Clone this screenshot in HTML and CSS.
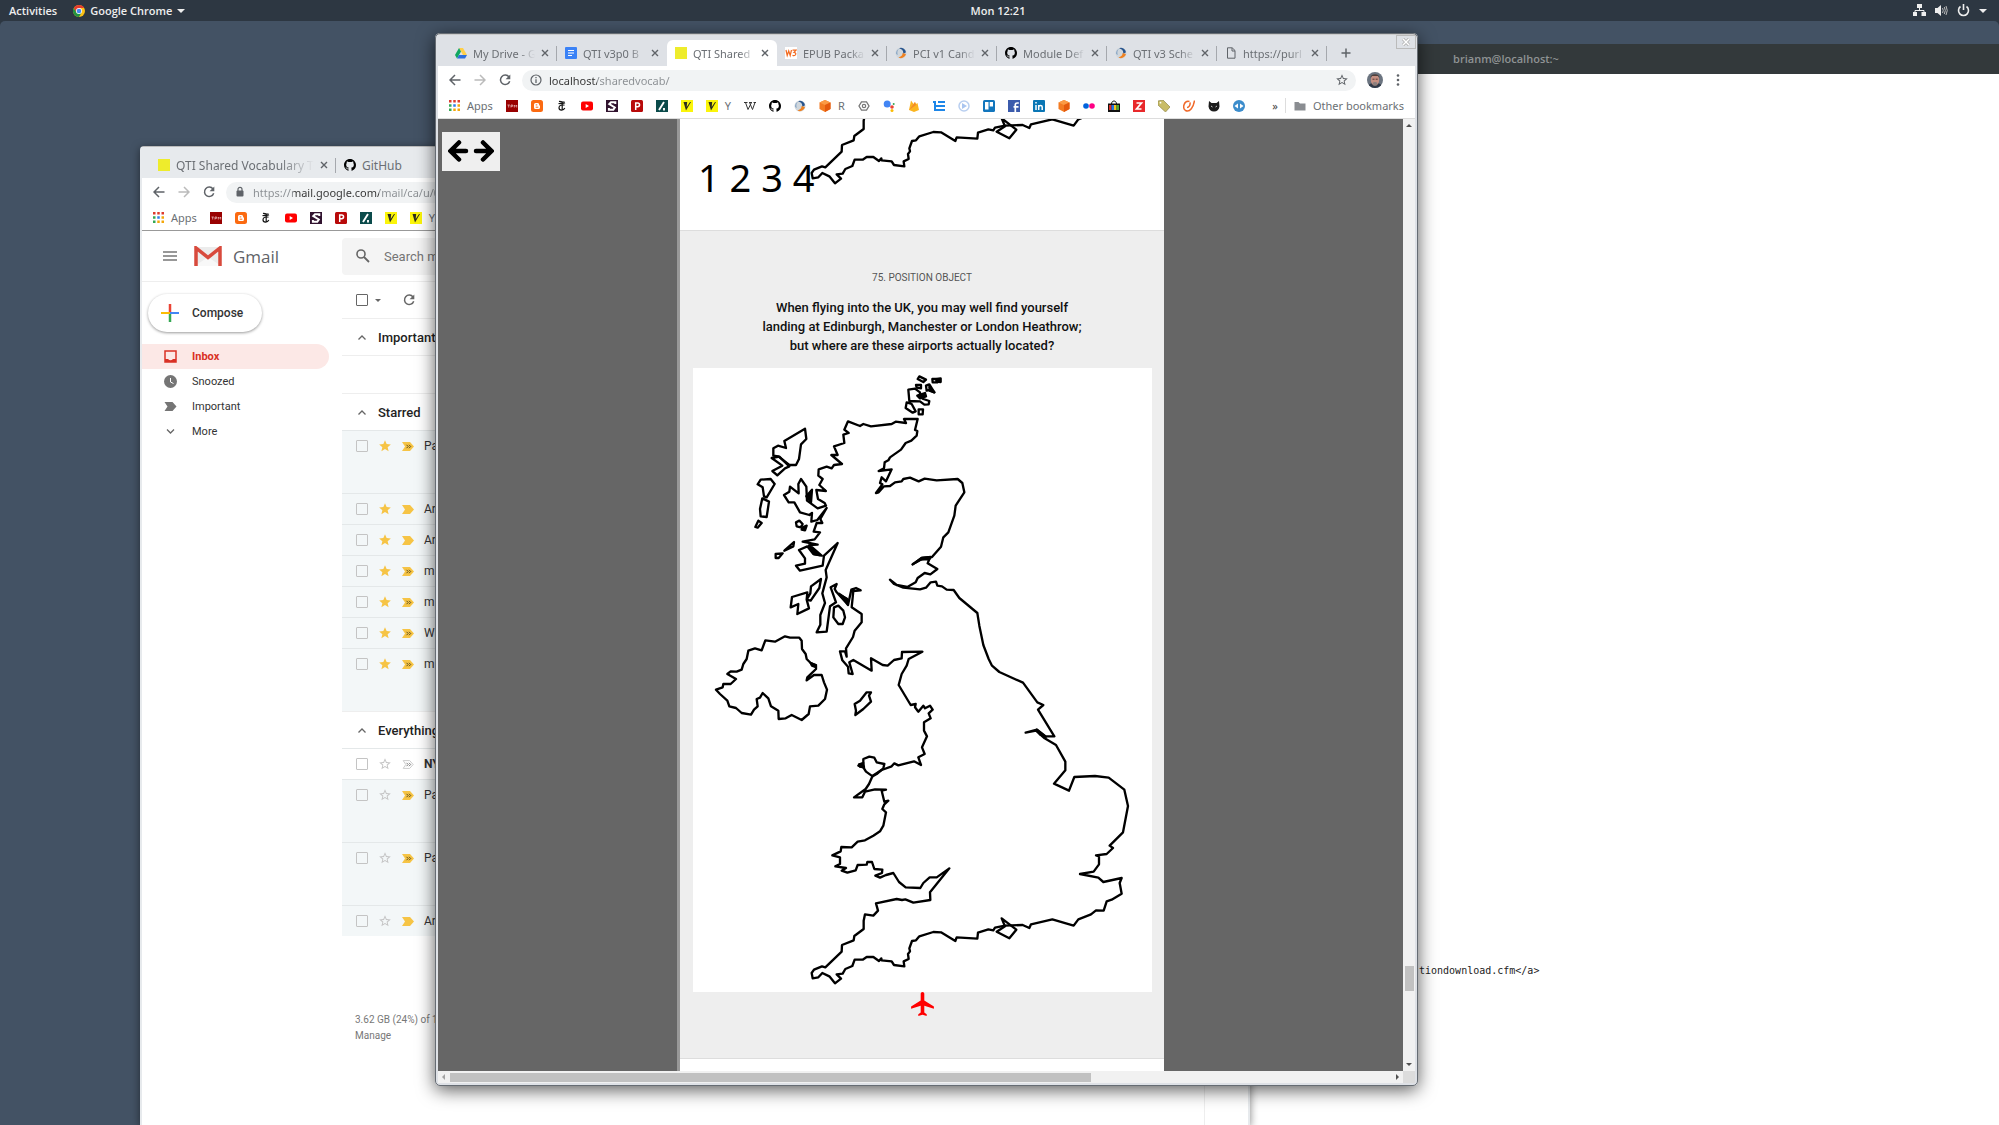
FILE: index.html
```html
<!DOCTYPE html>
<html lang="en">
<head>
    <meta charset="UTF-8">
    <meta name="viewport" content="width=device-width, initial-scale=1.0">
    <title>QTI Shared Vocabulary Test</title>
    <link rel="stylesheet" href="styles.css">
</head>
<body>

<!-- Icons -->
<svg class="sprite" aria-hidden="true">
    <symbol id="chrome" viewBox="0 0 12 12"><circle cx="6" cy="6" r="6" fill="#fbc116"/><path d="M.8 3A6 6 0 0 1 11.2 3H6L3.4 7.5z" fill="#e33b2e"/><path d="M.8 3A6 6 0 0 0 6 12l2.6-4.5H3.4z" fill="#229342"/><circle cx="6" cy="6" r="3" fill="#fff"/><circle cx="6" cy="6" r="2.3" fill="#4688f1"/></symbol>
    <symbol id="drive" viewBox="0 0 12 12"><path d="M4 1h4l4 7H8z" fill="#ffcf48"/><path d="M4 1l2 3.500-4 7L0 8z" fill="#11a861"/><path d="M4 8h8l-2 3.500H2z" fill="#2d6fdd"/></symbol>
    <symbol id="docs" viewBox="0 0 12 12"><rect width="12" height="12" rx="1" fill="#3b82f6"/><path d="M3 3.500h6M3 6h6M3 8.500h4" stroke="#fff" stroke-width="1.200"/></symbol>
    <symbol id="qti" viewBox="0 0 12 12"><rect width="12" height="12" fill="#eeec2c"/></symbol>
    <symbol id="w3" viewBox="0 0 12 12"><rect width="12" height="12" fill="#fff"/><path d="M1 3l1.200 5.500L3.700 4l1.500 4.500L6.500 3M7.500 3.200H11L9 5.400c3 .2 2 4-1.500 3" fill="none" stroke="#f36b21" stroke-width="1.200"/></symbol>
    <symbol id="ims" viewBox="0 0 12 12"><circle cx="6" cy="6" r="5.500" fill="#cfd6dc"/><path d="M4 1.200a5.200 5.200 0 0 1 7 4L8 7C9 4 7 2 4 1.200z" fill="#27548d"/><path d="M11 7a5.200 5.200 0 0 1-7.500 3.500C6 10 8 8 7.500 6z" fill="#ef8222"/><path d="M1 7a5 5 0 0 1 3-5c-2 2-2 4-1 6z" fill="#8fabc8"/></symbol>
    <symbol id="github" viewBox="0 0 16 16"><path d="M8 0C3.580 0 0 3.580 0 8c0 3.540 2.290 6.530 5.470 7.590.4.070.55-.17.55-.38v-1.490c-2.010.37-2.530-.49-2.690-.94-.09-.23-.48-.94-.82-1.130-.28-.15-.68-.52-.01-.53.63-.01 1.080.58 1.230.82.72 1.210 1.870.87 2.330.66.070-.52.28-.87.51-1.070-1.780-.2-3.640-.89-3.640-3.950 0-.87.31-1.590.82-2.150-.08-.2-.36-1.020.08-2.120 0 0 .67-.21 2.200.82a7.400 7.400 0 0 1 4 0c1.530-1.040 2.200-.82 2.200-.82.44 1.100.16 1.920.08 2.120.51.560.82 1.270.82 2.150 0 3.070-1.870 3.750-3.650 3.950.29.25.54.73.54 1.480v2.200c0 .21.15.46.55.38A8 8 0 0 0 16 8c0-4.420-3.580-8-8-8z"/></symbol>
    <symbol id="file" viewBox="0 0 12 12"><path d="M2.500.8h4.700L10 3.500v7.700H2.500zM7 1v3h3" fill="none" stroke="#5f6368"/></symbol>
    <symbol id="close" viewBox="0 0 8 8"><path d="M1 1l6 6M7 1L1 7" stroke="#5f6368" stroke-width="1.400"/></symbol>
    <symbol id="plus" viewBox="0 0 10 10"><path d="M5 .5v9M.5 5h9" stroke="#5f6368" stroke-width="1.500"/></symbol>
    <symbol id="back" viewBox="0 0 12 12"><path d="M11.500 6H1M6 1L1 6l5 5" fill="none" stroke="currentColor" stroke-width="1.500"/></symbol>
    <symbol id="forward" viewBox="0 0 12 12"><path d="M.5 6H11M6 1l5 5-5 5" fill="none" stroke="currentColor" stroke-width="1.500"/></symbol>
    <symbol id="reload" viewBox="0 0 12 12"><path d="M10 3A4.700 4.700 0 1 0 10.700 7.200" fill="none" stroke="currentColor" stroke-width="1.500"/><path d="M11.300.5v4.700H6.600z" fill="currentColor"/></symbol>
    <symbol id="info" viewBox="0 0 12 12"><circle cx="6" cy="6" r="5" fill="none" stroke="#5f6368" stroke-width="1.200"/><path d="M6 5.200V9M6 3v1.300" stroke="#5f6368" stroke-width="1.300"/></symbol>
    <symbol id="lock" viewBox="0 0 12 12"><rect x="2.500" y="4.500" width="7" height="6" rx="1" fill="#5f6368"/><path d="M4 5V3.300a2 2 0 0 1 4 0V5" fill="none" stroke="#5f6368" stroke-width="1.200"/></symbol>
    <symbol id="star-line" viewBox="0 0 24 24"><path d="M22 9.240l-7.190-.62L12 2 9.190 8.630 2 9.240l5.460 4.730L5.820 21 12 17.270 18.180 21l-1.630-7.030zM12 15.400l-3.760 2.270 1-4.280-3.320-2.880 4.380-.38L12 6.100l1.710 4.040 4.380.38-3.320 2.880 1 4.280z"/></symbol>
    <symbol id="star" viewBox="0 0 24 24"><path d="M12 17.270L18.180 21l-1.640-7.030L22 9.240l-7.190-.61L12 2 9.190 8.630 2 9.240l5.460 4.730L5.820 21z"/></symbol>
    <symbol id="apps" viewBox="0 0 11 11"><path d="M0 0h2.500v2.500H0zM4.250 0h2.500v2.500h-2.500zM8.500 0H11v2.500H8.500z" fill="#dd3b2d"/><path d="M0 4.250h2.500v2.500H0z" fill="#33a853"/><path d="M4.250 4.250h2.500v2.500h-2.500z" fill="#2f7de8"/><path d="M8.500 4.250H11v2.500H8.500zM4.250 8.500h2.500V11h-2.500zM8.500 8.500H11V11H8.500z" fill="#f4a70b"/><path d="M0 8.500h2.500V11H0z" fill="#33a853"/></symbol>
    <symbol id="tpm" viewBox="0 0 12 12"><rect width="12" height="12" fill="#990101"/><path d="M1.500 5h2.300M2.700 5v2.500M5 7.500V5h1.700v1.300H5M8.300 7.500V5l1.200 1.300L10.700 5v2.500" fill="none" stroke="#e8b9b9" stroke-width=".8"/></symbol>
    <symbol id="blogger" viewBox="0 0 12 12"><rect width="12" height="12" rx="2.500" fill="#fb6a11"/><path d="M3 4.500A1.500 1.500 0 0 1 4.500 3h2a1.800 1.800 0 0 1 1.700 2C8.300 5.600 9 5.400 9 6v1.500A1.500 1.500 0 0 1 7.500 9h-3A1.500 1.500 0 0 1 3 7.500z" fill="#fff"/><path d="M4.700 4.900h1.600M4.700 7.200h2.600" stroke="#fb6a11"/></symbol>
    <symbol id="nyt" viewBox="0 0 12 12"><path d="M3 1.500c1.500-.5 3 1.300 5.500.2M2.500 3.800c2.500-1.300 4 .6 6.500-1M8.500 5.200C5.500 4 3 5.500 3 7.700c0 3 4.500 3.300 5.800.3M6.200 2.500V10.500" fill="none" stroke="#151515" stroke-width="1.200"/></symbol>
    <symbol id="youtube" viewBox="0 0 12 12"><rect y="1.500" width="12" height="9" rx="2" fill="#f00"/><path d="M4.700 4v4L8 6z" fill="#fff"/></symbol>
    <symbol id="slate" viewBox="0 0 12 12"><rect width="12" height="12" fill="#31132f"/><path d="M9.300 4V2.300H5L3.300 4l5.500 3.500L7.300 9.700H2.900V8" fill="none" stroke="#fff" stroke-width="2"/></symbol>
    <symbol id="politico" viewBox="0 0 12 12"><rect width="12" height="12" rx="1.500" fill="#b80a0a"/><path d="M4.700 10V3h2a1.700 1.700 0 0 1 0 3.700h-2" fill="none" stroke="#fff" stroke-width="1.500"/></symbol>
    <symbol id="slash" viewBox="0 0 12 12"><rect width="12" height="12" fill="#0b4b4b"/><path d="M3 10l5-8M8 8v2.500" stroke="#fff" stroke-width="1.900"/></symbol>
    <symbol id="vox" viewBox="0 0 12 12"><rect width="12" height="12" fill="#fbf50a"/><path d="M2.500 2h3.700L5.700 7 9 2h1L5 10.500z" fill="#2c2c1d"/></symbol>
    <symbol id="wiki" viewBox="0 0 12 12"><path d="M0 2.500h3.500M5 2.500h3M9.500 2.500H12M1.500 2.500l2.500 7 3.500-7M5.500 2.500l3 7 2.500-7" fill="none" stroke="#333"/></symbol>
    <symbol id="cube" viewBox="0 0 12 12"><path d="M6 0l5.500 2.500v6.500L6 12 .5 9V2.500z" fill="#f37b22"/><path d="M6 0l5.500 2.500L6 5 .5 2.500z" fill="#fb9a45"/><path d="M6 5l5.500-2.500v6.500L6 12z" fill="#e4590d"/></symbol>
    <symbol id="hex" viewBox="0 0 12 12"><path d="M3.500 1.800h5L11 6l-2.500 4.200h-5L1 6z" fill="none" stroke="#777" stroke-width="1.300"/><circle cx="6" cy="6" r="1.700" fill="none" stroke="#777" stroke-width="1.200"/></symbol>
    <symbol id="assistant" viewBox="0 0 12 12"><circle cx="4.200" cy="4" r="3.500" fill="#4285f4"/><circle cx="9" cy="7" r="1.800" fill="#ea4335"/><circle cx="10.700" cy="4" r="1" fill="#34a853"/><circle cx="9" cy="10.500" r="1.500" fill="#fbbc05"/></symbol>
    <symbol id="firebase" viewBox="0 0 12 12"><path d="M1 10L3 .5 5.500 4 7 2l1 2 1.500-1L11 10l-5 2z" fill="#fbb51f"/><path d="M1 10l6-8 1 3z" fill="#f48b28"/></symbol>
    <symbol id="tree" viewBox="0 0 12 12"><path d="M0 2h3M2 2v8h3M2 6h3M5 2h7M5 6h7M5 10h7" fill="none" stroke="#1d86e8" stroke-width="2"/></symbol>
    <symbol id="play" viewBox="0 0 12 12"><circle cx="6" cy="6" r="5" fill="#fff" stroke="#b9cff0" stroke-width="1.500"/><path d="M4 3l5 3-5 3z" fill="#a9c5f0"/></symbol>
    <symbol id="trello" viewBox="0 0 12 12"><rect width="12" height="12" rx="1.500" fill="#1276bd"/><path d="M2 2h3.500v7.500H2zM6.700 2H10v4.500H6.700z" fill="#fff"/></symbol>
    <symbol id="facebook" viewBox="0 0 12 12"><rect width="12" height="12" fill="#3b5bac"/><path d="M7.300 12V4.800A1.800 1.800 0 0 1 9.300 3h1.500M5.500 6.800h5" fill="none" stroke="#fff" stroke-width="1.700"/></symbol>
    <symbol id="linkedin" viewBox="0 0 12 12"><rect width="12" height="12" rx="1" fill="#0a76b5"/><path d="M3 5v5M3 2v1.600M5.700 10V5M5.700 7c0-2 3.500-2 3.500 0v3" fill="none" stroke="#fff" stroke-width="1.500"/></symbol>
    <symbol id="flickr" viewBox="0 0 12 12"><circle cx="3" cy="6" r="2.800" fill="#0063dc"/><circle cx="9" cy="6" r="2.800" fill="#ff0084"/></symbol>
    <symbol id="bag" viewBox="0 0 12 12"><path d="M3.500 4c0-4 5-4 5 0" fill="none" stroke="#111"/><path d="M0 3.500h12V12H0z" fill="#111"/><path d="M1 5h2.500v5H1z" fill="#d93025"/><path d="M3.500 5H6v5H3.500z" fill="#1e73e8"/><path d="M6 5h2.500v5H6z" fill="#f6c21c"/><path d="M8.500 5H11v5H8.500z" fill="#52a535"/></symbol>
    <symbol id="zotero" viewBox="0 0 12 12"><rect width="12" height="12" fill="#e8282b"/><path d="M3.500 3h5l-5 6h5" fill="none" stroke="#fff" stroke-width="1.700"/></symbol>
    <symbol id="tag" viewBox="0 0 12 12"><path d="M0 1l5-1 7 7-4.500 5L0 5z" fill="#c8bc66" stroke="#8f8748" stroke-width=".7"/><circle cx="2.500" cy="2.700" r=".9" fill="#fff"/></symbol>
    <symbol id="swirl" viewBox="0 0 12 12"><path d="M6.500 1.500C1 0 -1 8 2.500 10.500 7 12.500 10.500 7 11.500.5M4 7.500c2 0 3.500-2.500 3-5" fill="none" stroke="#f0692a" stroke-width="1.500"/></symbol>
    <symbol id="cat" viewBox="0 0 12 12"><path d="M1 1l2.500 2h5L11 1l.5 5.500C11 10 9 11.500 6 11.500S1 10 .5 6.500z" fill="#1d1d1d"/><path d="M3 6l1.500 1M9 6L7.500 7" stroke="#ccc"/></symbol>
    <symbol id="sync" viewBox="0 0 12 12"><circle cx="6" cy="6" r="6" fill="#3c8dcc"/><path d="M5 3.500v5L1.500 6zM7 3.500v5L10.500 6z" fill="#fff"/></symbol>
    <symbol id="folder" viewBox="0 0 12 12"><path d="M.5 2h4L6 3.500h5.500v7H.5z" fill="#8a8d91"/></symbol>
    <symbol id="face" viewBox="0 0 16 16"><clipPath id="round"><circle cx="8" cy="8" r="8"/></clipPath><g clip-path="url(#round)"><path d="M0 0h16v16H0z" fill="#6b7480"/><path d="M0 16c1-4 4-5 8-5s7 1 8 5z" fill="#303947"/><ellipse cx="8" cy="8" rx="4.200" ry="5.500" fill="#c58f81"/><path d="M3.500 6C3 1 13 1 12.500 6L11 4H5z" fill="#4e403c"/><path d="M5.500 11c1.500-1.500 3.500-1.500 5 0l-1 2.500h-3z" fill="#8b7f7c"/><path d="M5.500 7.200h2M8.700 7.200h2" stroke="#553b36"/></g></symbol>
    <symbol id="marker" viewBox="0 0 12 9"><path d="M0 0h8l4 4.500L8 9H0l3-4.500z"/></symbol>
    <symbol id="marker-open" viewBox="0 0 12 9"><path d="M1.200.6h6.500l3.500 3.900-3.500 3.900H1.200l2.600-3.900z" fill="none" stroke="#ccc"/><path d="M4.500 2.800L6.200 4.500 4.500 6.200M7 2.800l1.700 1.700L7 6.200" fill="none" stroke="#777"/></symbol>
    <symbol id="marker-double" viewBox="0 0 12 9"><path d="M0 0h8l4 4.500L8 9H0l3-4.500z"/><path d="M4.500 2.800L6.200 4.500 4.500 6.200M7 2.800l1.700 1.700L7 6.200" fill="none" stroke="#5c4c1d"/></symbol>
    <symbol id="chevron-up" viewBox="0 0 8 5"><path d="M.5 4.500L4 1l3.500 3.500" fill="none" stroke="#666" stroke-width="1.300"/></symbol>
    <symbol id="chevron-down" viewBox="0 0 8 5"><path d="M.5.5L4 4 7.500.5" fill="none" stroke="#666" stroke-width="1.300"/></symbol>

    <!-- Outline of the United Kingdom -->
    <symbol id="uk" viewBox="9 27 1377 1872">
        <g fill="none" stroke="#000" stroke-width="7" stroke-linejoin="round">
            <path d="M642 180L683 180 675 213 682 216 680 230 664 245 647 252 633 272 600 295 595 304 584 310 582 328 566 336 605 331 588 367 575 355 570 372 577 376 558 402 566 400 582 382 600 381 615 370 635 367 640 360 660 356 686 367 704 359 740 364 803 360 817 372 823 400 797 440 793 470 775 520 760 535 753 563 726 594 695 597 668 616 690 602 718 600 713 613 742 630 721 646 704 642 683 657 677 670 652 684 620 678 600 662 612 675 640 686 690 691 708 686 722 670 738 668 742 680 756 682 770 692 791 693 808 717 862 762 868 800 880 858 896 900 906 920 928 939 999 971 1042 1030 1060 1038 1044 1052 1093 1132 1067 1132 1041 1112 1007 1121 1038 1115 1064 1138 1098 1158 1126 1208 1126 1234 1092 1274 1137 1295 1153 1254 1215 1251 1256 1256 1303 1292 1314 1341 1299 1420 1259 1460 1269 1467 1250 1485 1218 1489 1227 1492 1227 1516 1211 1538 1170 1545 1225 1556 1240 1569 1295 1557 1289 1572 1295 1604 1265 1622 1250 1627 1241 1655 1218 1654 1203 1666 1165 1681 1151 1700 1087 1681 1023 1696 1018 1707 998 1698 945 1700 915 1706 910 1714 895 1711 864 1721 862 1739 800 1735 796 1746 753 1720 730 1719 688 1732 678 1744 666 1746 658 1768 660 1777 654 1785 656 1800 641 1807 643 1822 612 1818 605 1807 575 1804 574 1798 567 1806 550 1794 530 1794 518 1802 494 1802 487 1821 466 1830 458 1844 440 1846 453 1859 435 1873 418 1852 397 1842 385 1855 368 1858 365 1842 372 1832 396 1822 406 1825 455 1778 456 1758 491 1744 493 1731 521 1710 521 1685 525 1666 550 1670 564 1655 558 1633 620 1620 636 1623 646 1621 670 1631 721 1623 720 1600 778 1528 740 1555 719 1555 700 1572 691 1587 647 1585 627 1569 610 1542 588 1548 570 1556 556 1550 576 1542 577 1532 553 1530 546 1509 532 1509 530 1517 503 1518 497 1534 472 1541 455 1535 468 1527 436 1522 450 1515 450 1495 427 1489 452 1477 454 1464 485 1465 503 1448 525 1444 550 1430 570 1417 580 1400 588 1360 577 1350 583 1336 595 1325 583 1328 575 1295 588 1292 555 1291 525 1298 517 1315 492 1315 527 1290 537 1275 548 1250 575 1233 605 1222 613 1213 625 1219 672 1207 693 1218 685 1195 704 1185 696 1165 711 1132 702 1115 702 1090 722 1078 716 1063 728 1052 720 1040 705 1048 700 1040 685 1058 675 1045 677 1035 662 1038 626 978 635 945 650 920 656 900 697 878 636 879 635 898 612 903 593 920 578 918 543 898 545 935 490 903 478 910 488 945 476 943 474 923 457 904 450 877 465 877 470 893 468 868 489 834 494 815 515 790 515 765 485 745 490 696 512 694 498 687 484 692 474 738 447 704 470 720 472 735 440 700 434 690 440 675 422 685 438 730 420 742 410 818 380 820 391 797 391 768 405 732 397 703 410 655 407 633 443 552 402 590 398 620 330 635 318 620 345 614 345 598 327 573 352 562 370 585 395 590 358 558 383 557 338 548 374 541 390 520 371 518 380 492 397 492 391 480 410 447 382 483 364 488 366 462 358 468 330 460 313 430 296 430 282 408 298 398 300 383 326 403 325 375 333 360 349 383 351 425 383 448 408 440 404 432 384 420 379 393 408 396 388 378 398 360 385 350 386 331 410 323 425 328 432 318 456 315 424 288 443 288 432 262 463 252 460 227 476 222 463 212 474 187 510 201 520 195 543 202 605 195 617 188 648 192z"/>
            <path d="M345 209L283 246 288 267 264 260 250 268 250 290 265 292 298 318 318 318 327 300 333 256 349 240z"/>
            <path d="M245 297L277 320 247 336 262 349 285 328 298 322 268 293z"/>
            <path d="M212 362L242 360 254 375 230 415 222 412 218 385 203 376zM217 418L237 428 230 474 212 472 210 450zM205 485L215 492 203 506 196 504z"/>
            <path d="M318 490L328 485 338 495 332 505 320 502zM312 549L310 562 283 575zM257 585L278 583 266 597 257 597z"/>
            <path d="M393 660L363 682 361 703 350 722 362 725 388 687zM352 700L306 714 302 745 325 735 322 765 357 748 350 722z"/>
            <path d="M432 745L445 740 460 755 465 775 458 795 445 795 430 775z"/>
            <path d="M655 92L675 89 690 100 690 112 700 120 718 126 716 136 703 137 690 127 658 126zM650 130L665 135 677 157 668 161 647 147zM686 151L699 151 698 166 686 166z"/>
            <path d="M688 52L708 62 700 69 683 60zM678 78L693 78 693 88 680 86zM727 60L738 60 742 70 728 70zM708 80L718 76 733 100 718 93 710 95z"/>
            <path d="M740 60L752 58 752 69 740 68zM718 84L733 100 720 96zM682 110L705 102 708 112 690 118zM338 505L350 500 345 514 335 512zM349 412L366 392 363 430zM358 560L372 585 390 588 368 572zM450 708L472 720 473 735zM362 912L378 918 376 924 366 920zM507 1216L520 1212 522 1225 510 1223zM695 597L668 616 700 598 718 600 722 594zM1040 1112L1067 1134 1050 1126z" fill="#000"/>
            <path d="M226 844L255 848 285 832 300 836 328 836 335 845 336 870 347 885 350 900 362 912 378 920 378 930 352 955 350 964 372 948 395 948 402 970 411 992 405 1020 385 1040 360 1042 356 1065 335 1083 305 1068 287 1078 266 1080 265 1055 243 1042 235 1018 218 1002 210 1016 200 1020 203 1042 192 1052 183 1067 155 1062 138 1047 118 1042 112 1025 90 1005 78 992 98 985 100 975 122 975 138 960 112 945 122 937 140 938 155 932 160 915 170 900 175 875 195 868 215 874z"/>
            <path d="M494 1035L510 1025 530 1000 543 1000 537 1010 543 1028 520 1050 496 1068 498 1055z"/>
            <path d="M520 1200L538 1193 553 1196 560 1210 583 1215 580 1228 560 1245 548 1252 528 1238 520 1225 505 1220 520 1212z"/>
            <path d="M935 1678L979 1712 958 1738 920 1718 945 1702z"/>
        </g>
    </symbol>
</svg>

<header class="topbar">
    <div class="topbar-left">
        <button>Activities</button>
        <button><svg class="i12"><use href="#chrome"/></svg>Google Chrome<span class="caret"></span></button>
    </div>
    <time>Mon 12:21</time>
    <div class="topbar-right">
        <svg width="13" height="13" viewBox="0 0 13 13"><path d="M4 0h5v4H4zM0 8h4v4H0zM8.500 8h4.500v4H8.500z" fill="#eee"/><path d="M6.500 4v2.500M2 8V6.500h9V8" fill="none" stroke="#eee"/></svg>
        <svg width="13" height="13" viewBox="0 0 13 13"><path d="M0 4h2.500L6 1v11L2.500 9H0z" fill="#eee"/><path d="M7.500 4q1.500 2.500 0 5M9.300 3q2 3.500 0 7M11 2q2.500 4.500 0 9" fill="none" stroke="#bbb"/></svg>
        <svg width="13" height="13" viewBox="0 0 13 13"><path d="M3.500 2.500a5 5 0 1 0 6 0M6.500 0v6" fill="none" stroke="#eee" stroke-width="1.600"/></svg>
        <span class="caret"></span>
    </div>
</header>

<main class="desktop">

    <!-- Terminal -->
    <section class="window terminal">
        <h2>brianm@localhost:~</h2>
        <pre>tiondownload.cfm&lt;/a&gt;</pre>
    </section>

    <!-- Gmail -->
    <section class="window mail">
        <nav class="tabs">
            <a class="tab wide" href="#"><svg class="i12"><use href="#qti"/></svg><span>QTI Shared Vocabulary Te</span><svg class="i8"><use href="#close"/></svg></a>
            <a class="tab wide" href="#"><svg class="i12"><use href="#github"/></svg><span>GitHub</span></a>
        </nav>
        <div class="toolbar">
            <button aria-label="Back"><svg class="i12"><use href="#back"/></svg></button>
            <button aria-label="Forward" class="off"><svg class="i12"><use href="#forward"/></svg></button>
            <button aria-label="Reload"><svg class="i12"><use href="#reload"/></svg></button>
            <div class="address">
                <svg class="i12"><use href="#lock"/></svg>
                <input class="url-mail" aria-label="Address" value="https://mail.google.com/mail/ca/u/0/">
            </div>
        </div>
        <nav class="bookmarks">
            <a href="#"><svg class="i11"><use href="#apps"/></svg>Apps</a>
            <a href="#"><svg class="i12"><use href="#tpm"/></svg></a>
            <a href="#"><svg class="i12"><use href="#blogger"/></svg></a>
            <a href="#"><svg class="i12"><use href="#nyt"/></svg></a>
            <a href="#"><svg class="i12"><use href="#youtube"/></svg></a>
            <a href="#"><svg class="i12"><use href="#slate"/></svg></a>
            <a href="#"><svg class="i12"><use href="#politico"/></svg></a>
            <a href="#"><svg class="i12"><use href="#slash"/></svg></a>
            <a href="#"><svg class="i12"><use href="#vox"/></svg></a>
            <a href="#"><svg class="i12"><use href="#vox"/></svg>Y</a>
        </nav>
        <div class="gmail">
            <header class="gmail-head">
                <button class="menu" aria-label="Menu"><svg width="14" height="10" viewBox="0 0 14 10"><path d="M0 1h14M0 5h14M0 9h14" stroke="#777" stroke-width="1.500"/></svg></button>
                <svg width="28" height="20" viewBox="0 0 28 20"><path d="M1 1h26v19H1z" fill="#ececec"/><path d="M1 20l13-9 13 9z" fill="#f8f8f8"/><path d="M2 20V2l12 9.500L26 2v18" fill="none" stroke="#d84a3d" stroke-width="3.500"/></svg>
                <span class="brand">Gmail</span>
                <div class="search">
                    <svg width="14" height="14" viewBox="0 0 14 14"><circle cx="5" cy="5" r="4" fill="none" stroke="#666" stroke-width="1.600"/><path d="M8 8l5 5" stroke="#666" stroke-width="1.800"/></svg>
                    <input aria-label="Search mail" placeholder="Search m">
                </div>
            </header>
            <div class="gmail-body">
                <aside>
                    <button class="compose"><svg width="18" height="18" viewBox="0 0 18 18"><path d="M9 0v8" stroke="#ea4335" stroke-width="2.500"/><path d="M9 10v8" stroke="#34a853" stroke-width="2.500"/><path d="M0 9h9" stroke="#fbbc05" stroke-width="2"/><path d="M9 9h9" stroke="#4285f4" stroke-width="2"/></svg>Compose</button>
                    <a class="folder current" href="#"><svg width="13" height="13" viewBox="0 0 13 13"><path d="M1 1h11v11H1z" fill="none" stroke="#d93025" stroke-width="1.500"/><path d="M1 9h3q2.500 2.500 5 0h3v3H1z" fill="#d93025"/></svg>Inbox</a>
                    <a class="folder" href="#"><svg width="13" height="13" viewBox="0 0 13 13"><circle cx="6.500" cy="6.500" r="6.500" fill="#757575"/><path d="M6.500 3v4l3 1.500" fill="none" stroke="#fff"/></svg>Snoozed</a>
                    <a class="folder" href="#"><svg width="13" height="9" fill="#757575"><use href="#marker"/></svg>Important</a>
                    <a class="folder" href="#"><svg width="13" height="5"><use href="#chevron-down"/></svg>More</a>
                </aside>
                <div class="messages">
                    <div class="tools"><input type="checkbox" aria-label="Select all"><span class="caret dark"></span><button aria-label="Refresh"><svg class="i12"><use href="#reload"/></svg></button></div>
                    <h3><svg width="8" height="5"><use href="#chevron-up"/></svg>Important</h3>
                    <div class="empty"></div>
                    <h3><svg width="8" height="5"><use href="#chevron-up"/></svg>Starred</h3>
                    <ul>
                        <li class="tall"><input type="checkbox" aria-label="Select"><svg class="i14 on"><use href="#star"/></svg><svg class="mark"><use href="#marker-double"/></svg>Pa</li>
                        <li><input type="checkbox" aria-label="Select"><svg class="i14 on"><use href="#star"/></svg><svg class="mark"><use href="#marker"/></svg>Ar</li>
                        <li><input type="checkbox" aria-label="Select"><svg class="i14 on"><use href="#star"/></svg><svg class="mark"><use href="#marker"/></svg>Ar</li>
                        <li><input type="checkbox" aria-label="Select"><svg class="i14 on"><use href="#star"/></svg><svg class="mark"><use href="#marker-double"/></svg>m</li>
                        <li><input type="checkbox" aria-label="Select"><svg class="i14 on"><use href="#star"/></svg><svg class="mark"><use href="#marker-double"/></svg>m</li>
                        <li><input type="checkbox" aria-label="Select"><svg class="i14 on"><use href="#star"/></svg><svg class="mark"><use href="#marker-double"/></svg>W</li>
                        <li class="tall"><input type="checkbox" aria-label="Select"><svg class="i14 on"><use href="#star"/></svg><svg class="mark"><use href="#marker-double"/></svg>m</li>
                    </ul>
                    <h3><svg width="8" height="5"><use href="#chevron-up"/></svg>Everything</h3>
                    <ul>
                        <li class="unread"><input type="checkbox" aria-label="Select"><svg class="i14"><use href="#star-line"/></svg><svg class="mark"><use href="#marker-open"/></svg>NY</li>
                        <li class="tall"><input type="checkbox" aria-label="Select"><svg class="i14"><use href="#star-line"/></svg><svg class="mark"><use href="#marker-double"/></svg>Pa</li>
                        <li class="tall"><input type="checkbox" aria-label="Select"><svg class="i14"><use href="#star-line"/></svg><svg class="mark"><use href="#marker-double"/></svg>Pa</li>
                        <li><input type="checkbox" aria-label="Select"><svg class="i14"><use href="#star-line"/></svg><svg class="mark"><use href="#marker"/></svg>Ar</li>
                    </ul>
                    <footer>3.62 GB (24%) of 1<br><a href="#">Manage</a></footer>
                </div>
                <div class="side-panel"></div>
            </div>
        </div>
    </section>

    <!-- Shared vocabulary test page -->
    <section class="window browser">
        <button class="window-close" aria-label="Close window"><svg class="i8" viewBox="0 0 8 8"><path d="M1 1l6 6M7 1L1 7" stroke="#aaa" stroke-width="3"/><path d="M1 1l6 6M7 1L1 7" stroke="#fff" stroke-width="1.500"/></svg></button>
        <nav class="tabs">
            <a class="tab" href="#"><svg class="i12"><use href="#drive"/></svg><span>My Drive - G</span><svg class="i8"><use href="#close"/></svg></a>
            <a class="tab no-line" href="#"><svg class="i12"><use href="#docs"/></svg><span>QTI v3p0 B</span><svg class="i8"><use href="#close"/></svg></a>
            <a class="tab active no-line" href="#"><svg class="i12"><use href="#qti"/></svg><span>QTI Shared</span><svg class="i8"><use href="#close"/></svg></a>
            <a class="tab" href="#"><svg class="i12"><use href="#w3"/></svg><span>EPUB Packa</span><svg class="i8"><use href="#close"/></svg></a>
            <a class="tab" href="#"><svg class="i12"><use href="#ims"/></svg><span>PCI v1 Cand</span><svg class="i8"><use href="#close"/></svg></a>
            <a class="tab" href="#"><svg class="i12"><use href="#github"/></svg><span>Module Def</span><svg class="i8"><use href="#close"/></svg></a>
            <a class="tab" href="#"><svg class="i12"><use href="#ims"/></svg><span>QTI v3 Sche</span><svg class="i8"><use href="#close"/></svg></a>
            <a class="tab" href="#"><svg class="i12"><use href="#file"/></svg><span>https://purl</span><svg class="i8"><use href="#close"/></svg></a>
            <button class="new-tab" aria-label="New tab"><svg class="i10"><use href="#plus"/></svg></button>
        </nav>
        <div class="toolbar">
            <button aria-label="Back"><svg class="i12"><use href="#back"/></svg></button>
            <button aria-label="Forward" class="off"><svg class="i12"><use href="#forward"/></svg></button>
            <button aria-label="Reload"><svg class="i12"><use href="#reload"/></svg></button>
            <div class="address">
                <svg class="i12"><use href="#info"/></svg>
                <input class="url-local" aria-label="Address" value="localhost/sharedvocab/">
                <svg class="i14" fill="#5f6368"><use href="#star-line"/></svg>
            </div>
            <button aria-label="Profile"><svg class="i16"><use href="#face"/></svg></button>
            <button aria-label="More"><svg width="4" height="12" viewBox="0 0 4 12" fill="#5f6368"><circle cx="2" cy="1.500" r="1.300"/><circle cx="2" cy="6" r="1.300"/><circle cx="2" cy="10.500" r="1.300"/></svg></button>
        </div>
        <nav class="bookmarks">
            <a href="#"><svg class="i11"><use href="#apps"/></svg>Apps</a>
            <a href="#"><svg class="i12"><use href="#tpm"/></svg></a>
            <a href="#"><svg class="i12"><use href="#blogger"/></svg></a>
            <a href="#"><svg class="i12"><use href="#nyt"/></svg></a>
            <a href="#"><svg class="i12"><use href="#youtube"/></svg></a>
            <a href="#"><svg class="i12"><use href="#slate"/></svg></a>
            <a href="#"><svg class="i12"><use href="#politico"/></svg></a>
            <a href="#"><svg class="i12"><use href="#slash"/></svg></a>
            <a href="#"><svg class="i12"><use href="#vox"/></svg></a>
            <a href="#"><svg class="i12"><use href="#vox"/></svg>Y</a>
            <a href="#"><svg class="i12"><use href="#wiki"/></svg></a>
            <a href="#"><svg class="i12"><use href="#github"/></svg></a>
            <a href="#"><svg class="i12"><use href="#ims"/></svg></a>
            <a href="#"><svg class="i12"><use href="#cube"/></svg>R</a>
            <a href="#"><svg class="i12"><use href="#hex"/></svg></a>
            <a href="#"><svg class="i12"><use href="#assistant"/></svg></a>
            <a href="#"><svg class="i12"><use href="#firebase"/></svg></a>
            <a href="#"><svg class="i12"><use href="#tree"/></svg></a>
            <a href="#"><svg class="i12"><use href="#play"/></svg></a>
            <a href="#"><svg class="i12"><use href="#trello"/></svg></a>
            <a href="#"><svg class="i12"><use href="#facebook"/></svg></a>
            <a href="#"><svg class="i12"><use href="#linkedin"/></svg></a>
            <a href="#"><svg class="i12"><use href="#cube"/></svg></a>
            <a href="#"><svg class="i12"><use href="#flickr"/></svg></a>
            <a href="#"><svg class="i12"><use href="#bag"/></svg></a>
            <a href="#"><svg class="i12"><use href="#zotero"/></svg></a>
            <a href="#"><svg class="i12"><use href="#tag"/></svg></a>
            <a href="#"><svg class="i12"><use href="#swirl"/></svg></a>
            <a href="#"><svg class="i12"><use href="#cat"/></svg></a>
            <a href="#"><svg class="i12"><use href="#sync"/></svg></a>
            <button class="overflow">»</button>
            <a class="other" href="#"><svg class="i12"><use href="#folder"/></svg>Other bookmarks</a>
        </nav>
        <div class="page">
            <div class="viewport">
                <button class="slide" aria-label="Previous and next"><svg width="46" height="22" viewBox="0 0 46 22"><path d="M18 11H3M11 2.500L2.500 11l8.500 8.500M28 11h15M35 2.500l8.500 8.500-8.500 8.500" fill="none" stroke="#000" stroke-width="4.500" stroke-linecap="round"/></svg></button>
                <div class="sheet">
                    <section class="previous">
                        <svg class="map"><use href="#uk"/></svg>
                        <p>1 2 3 4</p>
                    </section>
                    <section class="question">
                        <h1>75. POSITION OBJECT</h1>
                        <p>When flying into the UK, you may well find yourself<br>landing at Edinburgh, Manchester or London Heathrow;<br>but where are these airports actually located?</p>
                        <svg class="map"><use href="#uk"/></svg>
                        <svg class="plane" viewBox="2 2 19 20"><path d="M21 16v-2l-8-5V3.500c0-.83-.67-1.500-1.500-1.500S10 2.670 10 3.500V9l-8 5v2l8-2.500V19l-2 1.500V22l3.500-1 3.500 1v-1.500L13 19v-5.500l8 2.500z" fill="#f00"/></svg>
                    </section>
                </div>
            </div>
            <div class="bar vertical"><span class="arrow up"></span><span class="thumb"></span><span class="arrow down"></span></div>
            <div class="bar horizontal"><span class="arrow left"></span><span class="thumb"></span><span class="arrow right"></span></div>
            <div class="corner"></div>
        </div>
    </section>
</main>
</body>
</html>
```
FILE: styles.css
```css
* {
    box-sizing: border-box;
}
body {
    margin: 0;
    height: 100vh;
    overflow: hidden;
    display: flex;
    flex-direction: column;
    background: #2d3742;
    font-family: "Noto Sans", sans-serif;
    font-size: 11px;
}
button {
    display: flex;
    align-items: center;
    padding: 0;
    border: none;
    background: none;
    color: inherit;
    font: inherit;
}
a {
    color: inherit;
    text-decoration: none;
}
h1, h2, h3, p, ul, pre {
    margin: 0;
    padding: 0;
}
svg {
    flex: none;
}
.sprite {
    position: absolute;
    width: 0;
    height: 0;
}
.i8 { width: 8px; height: 8px; }
.i10 { width: 10px; height: 10px; }
.i11 { width: 11px; height: 11px; }
.i12 { width: 12px; height: 12px; }
.i14 { width: 14px; height: 14px; }
.i16 { width: 16px; height: 16px; }
.caret {
    border: 4px solid transparent;
    border-top-color: #eee;
    border-bottom: none;
}
.caret.dark {
    border-width: 3px;
    border-top-color: #666;
    border-bottom: none;
}

/* Top bar */
.topbar {
    flex: none;
    height: 21px;
    padding: 0 12px 0 9px;
    display: grid;
    grid-template-columns: 1fr auto 1fr;
    align-items: center;
    color: #eee;
    font-family: "Open Sans", sans-serif;
    font-weight: 600;
}
.topbar-left, .topbar-right {
    display: flex;
    align-items: center;
    gap: 16px;
}
.topbar-left button {
    gap: 5px;
}
.topbar-right {
    justify-content: flex-end;
    gap: 9px;
}

/* Windows */
.desktop {
    position: relative;
    flex: 1;
    overflow: hidden;
    border-radius: 5px 5px 0 0;
    background: #435264;
}
.window {
    position: absolute;
    display: flex;
    flex-direction: column;
    background: #fff;
}
.terminal {
    inset: 23px 0 0 1013px;
}
.terminal h2 {
    height: 30px;
    line-height: 30px;
    background: #33393b;
    color: #8f9394;
    font-family: "Open Sans", sans-serif;
    font-size: 11px;
    font-weight: 600;
    text-align: center;
}
.terminal pre {
    margin: 890px 0 0 406px;
    color: #222;
    font: 10px/14px "DejaVu Sans Mono", monospace;
}
.mail {
    inset: 125px 749px 0 140px;
    border: 2px solid #e7eaed;
    border-top: 1px solid #bbb;
    border-bottom: none;
    border-radius: 4px 4px 0 0;
    box-shadow: 0 2px 8px rgba(0, 0, 0, .5);
}
.browser {
    inset: 12px 581px 39px 435px;
    border: 3px solid #dee1e6;
    border-top: 2px solid #ccc;
    border-radius: 5px;
    outline: 1px solid #666c73;
    outline-offset: -1px;
    box-shadow: 0 4px 18px rgba(0, 0, 0, .65);
}
.window-close {
    position: absolute;
    top: 0;
    right: -1px;
    width: 20px;
    height: 14px;
    justify-content: center;
    border: 1px solid #bbb;
}

/* Browser chrome */
.tabs {
    flex: none;
    display: flex;
    height: 31px;
    padding: 5px 0 0 9px;
    background: #dee1e6;
    color: #6b6f74;
}
.mail .tabs {
    padding-left: 8px;
    background: #e7eaed;
}
.tab {
    flex: 0 1 110px;
    min-width: 0;
    display: flex;
    align-items: center;
    gap: 6px;
    padding: 0 8px;
    position: relative;
}
.tab.wide {
    flex-basis: 186px;
}
.tab span {
    flex: 1;
    overflow: hidden;
    white-space: nowrap;
    -webkit-mask-image: linear-gradient(90deg, #000 75%, transparent);
    mask-image: linear-gradient(90deg, #000 75%, transparent);
}
.mail .tab {
    font-size: 12px;
}
.tab::after {
    content: "";
    position: absolute;
    right: 0;
    top: 6px;
    width: 1px;
    height: 15px;
    background: #a5a8ad;
}
.tab.no-line::after, .tab.wide + .wide::after {
    display: none;
}
.tab.wide + .wide span {
    -webkit-mask-image: none;
    mask-image: none;
}
.tab.active {
    border-radius: 6px 6px 0 0;
    background: #fff;
}
.new-tab {
    padding: 0 14px;
}
.toolbar {
    flex: none;
    display: flex;
    align-items: center;
    gap: 13px;
    height: 28px;
    padding: 0 15px 0 11px;
    color: #5f6368;
}
.toolbar .off {
    color: #bbb;
}
.address {
    flex: 1;
    display: flex;
    align-items: center;
    gap: 7px;
    height: 21px;
    padding: 0 7px 0 8px;
    margin: 0 -2px;
    border-radius: 11px;
    background: #f1f3f4;
}
.address input {
    flex: 1;
    min-width: 0;
    padding: 0;
    border: none;
    color: transparent;
    font: inherit;
    -webkit-background-clip: text;
    background-clip: text;
}
.url-local {
    background-image: linear-gradient(90deg, #333 48px, #8a8e92 48px);
}
.url-mail {
    background-image: linear-gradient(90deg, #8a8e92 40px, #333 40px 126px, #8a8e92 126px);
}
.bookmarks {
    flex: none;
    display: flex;
    align-items: center;
    gap: 13px;
    height: 25px;
    padding: 0 11px 1px;
    border-bottom: 1px solid #ddd;
    color: #6b6f74;
}
.mail .bookmarks {
    border-color: #999;
}
.bookmarks a {
    display: flex;
    align-items: center;
    gap: 7px;
    white-space: nowrap;
}
.overflow {
    margin-left: auto;
    color: #444;
}
.bookmarks .other {
    margin-left: -6px;
    padding-left: 8px;
    border-left: 1px solid #ddd;
}

/* Gmail */
.gmail {
    flex: 1;
    display: flex;
    flex-direction: column;
    min-height: 0;
    font-family: Roboto, sans-serif;
    font-size: 12px;
    color: #333;
}
.gmail-head {
    flex: none;
    display: flex;
    align-items: center;
    height: 51px;
    padding-left: 21px;
    border-bottom: 1px solid #eee;
}
.menu {
    margin-right: 17px;
}
.brand {
    width: 120px;
    padding-left: 11px;
    color: #5f6368;
    font: 17px "Open Sans", sans-serif;
}
.search {
    flex: 1;
    display: flex;
    align-items: center;
    gap: 14px;
    height: 37px;
    padding-left: 14px;
    border-radius: 4px;
    background: #f4f4f4;
}
.search input {
    border: none;
    padding: 0;
    background: none;
    font: 13px Roboto, sans-serif;
}
.gmail-body {
    flex: 1;
    display: flex;
    min-height: 0;
}
aside {
    width: 200px;
    flex: none;
}
.compose {
    width: 114px;
    height: 38px;
    margin: 12px 0 12px 6px;
    padding-left: 13px;
    gap: 13px;
    border-radius: 19px;
    font-weight: 500;
    box-shadow: 0 1px 3px rgba(0, 0, 0, .4);
}
.folder {
    display: flex;
    align-items: center;
    gap: 15px;
    width: 187px;
    height: 25px;
    padding-left: 22px;
    font-size: 11px;
}
.folder.current {
    border-radius: 0 13px 13px 0;
    background: #fce8e6;
    color: #d93025;
    font-weight: bold;
}
.messages {
    flex: 1;
}
.side-panel {
    width: 44px;
    border-left: 1px solid #eee;
}
input[type="checkbox"] {
    appearance: none;
    width: 12px;
    height: 12px;
    margin: 0;
    border: 1px solid #c4c4c4;
    border-radius: 1px;
}
.tools {
    display: flex;
    align-items: center;
    height: 36px;
    padding-left: 14px;
    color: #666;
}
.tools input[type="checkbox"] {
    border-color: #666;
}
.tools .caret {
    margin: 0 22px 0 7px;
}
.messages h3 {
    display: flex;
    align-items: center;
    gap: 12px;
    height: 37px;
    padding-left: 16px;
    border-top: 1px solid #eee;
    color: #222;
    font-size: 13px;
    font-weight: 500;
}
.empty {
    height: 38px;
    border-top: 1px solid #eee;
}
.messages ul {
    list-style: none;
}
.messages li {
    display: flex;
    align-items: center;
    height: 31px;
    padding-left: 14px;
    border-top: 1px solid #e4e8e9;
    background: #f3f7f8;
    fill: #c4c4c4;
}
.messages li.tall {
    height: 63px;
    padding-bottom: 32px;
}
.messages li.unread {
    background: #fff;
    font-weight: bold;
}
.messages li .i14 {
    margin: 0 10px;
}
.messages li .on {
    fill: #f6c445;
}
.mark {
    width: 12px;
    height: 9px;
    margin-right: 10px;
    fill: #f6c445;
}
.messages footer {
    padding: 76px 0 0 13px;
    color: #777;
    font-size: 10px;
    line-height: 16px;
}

/* Page inside the browser */
.page {
    flex: 1;
    min-height: 0;
    display: grid;
    grid-template: minmax(0, 1fr) 12px / 1fr 12px;
}
.viewport {
    position: relative;
    overflow: hidden;
    background: #666;
}
.slide {
    position: absolute;
    top: 13px;
    left: 4px;
    width: 58px;
    height: 39px;
    padding-bottom: 2px;
    justify-content: center;
    background: #efefef;
}
.sheet {
    width: 487px;
    min-height: 100%;
    margin: 0 auto;
    border-left: 3px solid #999;
    background: #fff;
}
.map {
    display: block;
    width: 459px;
    height: 624px;
    background: #fff;
}
.previous {
    display: flex;
    flex-direction: column;
    justify-content: flex-end;
    align-items: center;
    height: 111px;
    padding-bottom: 21px;
    overflow: hidden;
}
.previous p {
    align-self: stretch;
    margin-top: -47px;
    padding-left: 18px;
    font-size: 38px;
    line-height: 64px;
}
.question {
    display: flex;
    flex-direction: column;
    align-items: center;
    padding: 39px 12px 42px;
    border: 1px solid #ddd;
    border-width: 1px 0;
    background: #eee;
    font-family: Roboto, sans-serif;
    text-align: center;
}
.question h1 {
    color: #555;
    font-size: 10px;
    font-weight: normal;
    line-height: 16px;
}
.question p {
    margin: 12px 0 13px;
    color: #111;
    font-size: 13px;
    font-weight: 500;
    line-height: 19px;
}
.plane {
    width: 23px;
    height: 24px;
}
.bar {
    display: flex;
    align-items: center;
    justify-content: space-between;
    background: #f1f1f1;
}
.vertical {
    flex-direction: column;
    padding: 5px 0;
}
.vertical .thumb {
    width: 9px;
    height: 25px;
    margin-top: 839px;
    margin-bottom: auto;
}
.horizontal {
    padding: 0 4px;
}
.horizontal .thumb {
    width: 67%;
    height: 9px;
    margin-left: 5px;
    margin-right: auto;
}
.thumb {
    background: #c1c1c1;
}
.arrow {
    border: 3px solid transparent;
}
.up { border-bottom-color: #505050; border-top: none; }
.down { border-top-color: #505050; border-bottom: none; }
.left { border-right-color: #a3a3a3; border-left: none; }
.right { border-left-color: #505050; border-right: none; }
.corner {
    background: #dcdcdc;
}
```
